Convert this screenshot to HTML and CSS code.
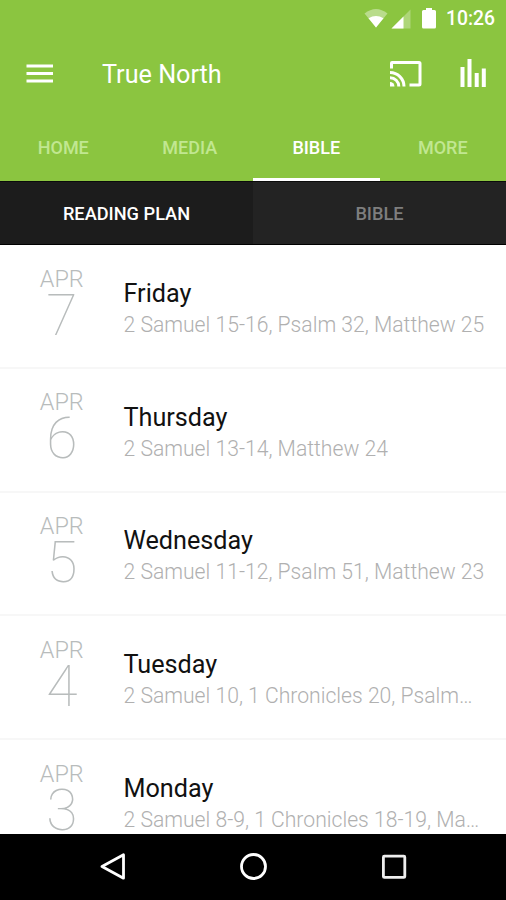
FILE: index.html
```
<!DOCTYPE html>
<html lang="en">
<head>
<meta charset="utf-8">
<title>True North</title>
<link rel="stylesheet" href="styles.css">
</head>
<body>
<div class="screen">
  <header class="header">
    <div class="status">
      <svg class="wifi" width="24" height="20" viewBox="0 0 24 20"><path d="M0.500 4.500Q12-4.500 23.500 4.500L12 18.500z" fill="#fff" opacity=".4"/><path d="M4.500 9.300Q12 4.500 19.500 9.300L12 18.500z" fill="#fff"/></svg>
      <svg class="signal" width="20" height="20" viewBox="0 0 20 20"><path d="M0.500 19.500L19.500 0.500V19.500z" fill="#fff" opacity=".3"/><path d="M0.500 19.500L12.500 7.500V19.500z" fill="#fff"/></svg>
      <svg class="battery" width="14" height="22" viewBox="0 0 14 22"><path d="M4 0h6v2h2.500q1.500 0 1.500 1.500v15.500q0 1.500-1.500 1.500h-11q-1.500 0-1.500-1.500V3.500q0-1.500 1.500-1.500H4z" fill="#fff"/></svg>
      <span class="clock">10:26</span>
    </div>
    <div class="toolbar">
      <svg class="menu" width="28" height="20" viewBox="0 0 28 20"><path d="M0.500 2h26.500M0.500 9.500h26.500M0.500 17h26.500" stroke="#fff" stroke-width="3"/></svg>
      <h1 class="title">True North</h1>
      <svg class="cast" width="34" height="28" viewBox="0 0 34 28"><g fill="none" stroke="#fff" stroke-width="3"><path d="M2.500 8.500V3q0-.5.5-.5h27q1 0 1 1v20.500q0 1-1 1H20.500"/><path d="M1 12.500A14 14 0 0 1 15 26.500M1 17.700A8.800 8.800 0 0 1 9.800 26.500"/></g><path d="M1 22a4.500 4.500 0 0 1 4.500 4.500H1z" fill="#fff"/></svg>
      <svg class="bars" width="28" height="30" viewBox="0 0 28 30"><path d="M2.500 8V28M9.500 0V28M16.700 14V28M23.800 9.500V28" stroke="#fff" stroke-width="4"/></svg>
    </div>
    <nav class="tabs">
      <div class="tab"><span>HOME</span></div>
      <div class="tab"><span>MEDIA</span></div>
      <div class="tab active"><span>BIBLE</span></div>
      <div class="tab"><span>MORE</span></div>
    </nav>
  </header>
  <nav class="subtabs">
    <div class="subtab active"><span class="plan">READING PLAN</span></div>
    <div class="subtab"><span>BIBLE</span></div>
  </nav>
  <main class="list">
    <article class="row"><div class="date"><div class="month">APR</div><div class="num">7</div></div><div class="info"><h2 class="day">Friday</h2><p class="text">2 Samuel 15-16, Psalm 32, Matthew 25</p></div></article>
    <article class="row"><div class="date"><div class="month">APR</div><div class="num">6</div></div><div class="info"><h2 class="day">Thursday</h2><p class="text">2 Samuel 13-14, Matthew 24</p></div></article>
    <article class="row"><div class="date"><div class="month">APR</div><div class="num">5</div></div><div class="info"><h2 class="day">Wednesday</h2><p class="text">2 Samuel 11-12, Psalm 51, Matthew 23</p></div></article>
    <article class="row"><div class="date"><div class="month">APR</div><div class="num">4</div></div><div class="info"><h2 class="day">Tuesday</h2><p class="text">2 Samuel 10, 1 Chronicles 20, Psalm…</p></div></article>
    <article class="row"><div class="date"><div class="month">APR</div><div class="num">3</div></div><div class="info"><h2 class="day">Monday</h2><p class="text">2 Samuel 8-9, 1 Chronicles 18-19, Ma…</p></div></article>
  </main>
  <footer class="navbar">
    <svg width="28" height="28" viewBox="0 0 28 28"><path d="M3 13.500L24.500 1.800V25.200z" fill="none" stroke="#fff" stroke-width="2.800" stroke-linejoin="round"/></svg>
    <svg width="28" height="28" viewBox="0 0 28 28"><circle cx="14.500" cy="13.500" r="12" fill="none" stroke="#fff" stroke-width="2.800"/></svg>
    <svg width="28" height="28" viewBox="0 0 28 28"><rect x="4.400" y="3.200" width="21.400" height="21.200" rx="1" fill="none" stroke="#eee" stroke-width="2.800"/></svg>
  </footer>
</div>
</body>
</html>
```
FILE: styles.css
```
* { box-sizing: border-box; }
body { margin: 0; font-family: Roboto, sans-serif; background: #fff; }
h1, h2, p { margin: 0; font-weight: 400; }
svg { display: block; flex: none; }
.screen { width: 506px; height: 900px; display: flex; flex-direction: column; overflow: hidden; }
.header { height: 181px; flex: none; background: #8bc540; color: #fff; }
.status { height: 37px; display: flex; justify-content: flex-end; align-items: center; padding-right: 11px; }
.wifi { margin-right: 3px; }
.signal { margin-right: 11px; }
.battery { margin-right: 10px; }
.clock { font-size: 19.3px; font-weight: 500; line-height: 24px; white-space: nowrap; }
.toolbar { height: 77px; display: flex; align-items: center; padding: 0 18px 3px 26px; }
.title { font-size: 25.2px; line-height: 32px; margin: 2px auto 0 48px; white-space: nowrap; }
.cast { margin-right: 37px; }
.tabs { height: 67px; display: grid; grid-template-columns: repeat(4, 1fr); }
.tab { display: flex; justify-content: center; align-items: center; padding-top: 2px; border-bottom: 3px solid transparent; font-size: 18px; font-weight: 500; color: #c1e791; }
.tab.active { color: #fff; border-color: #fff; }
.subtabs { height: 64px; flex: none; display: grid; grid-template-columns: 1fr 1fr; background: #232323; border-top: 1px solid #0b0b0b; border-bottom: 1px solid #000; }
.subtab { display: flex; align-items: center; justify-content: center; font-size: 18.2px; font-weight: 500; color: #7e7e7e; }
.subtab.active { background: #1c1c1c; color: #fff; }
.list { height: 588.5px; flex: none; overflow: hidden; }
.row { height: 123.8px; border-bottom: 2px solid #f7f7f7; display: flex; }
.date { width: 123.5px; padding-top: 19.6px; text-align: center; color: #b8bcbc; }
.month { font-size: 23.4px; line-height: 28px; font-weight: 300; }
.num { font-size: 57px; line-height: 45px; font-weight: 100; }
.info { padding-top: 32.8px; }
.day { font-size: 25.2px; line-height: 32px; color: #111; }
.text { font-size: 21.15px; line-height: 30px; font-weight: 300; color: #b0b0b0; white-space: nowrap; }
.navbar { flex: 1; background: #000; display: flex; justify-content: center; align-items: center; gap: 112px; }
```
